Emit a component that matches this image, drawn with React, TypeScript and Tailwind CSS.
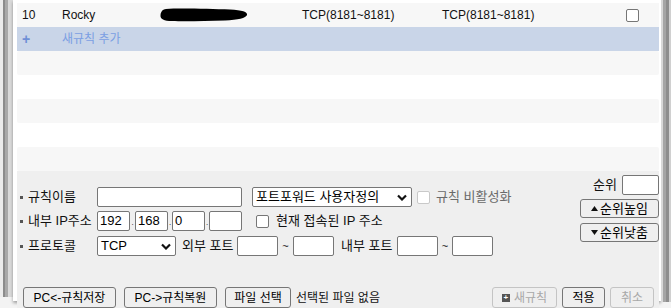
import React from "react";

const Check = ({ disabled = false }: { disabled?: boolean }) => (
  <div
    className={
      "w-[13px] h-[13px] rounded-[2px] border bg-white shrink-0 " +
      (disabled ? "border-[#c9c9c9] bg-[#f4f4f4]" : "border-[#767676]")
    }
  />
);

const Input = ({ w, value = "", h = "h-[20px]" }: { w: string; value?: string; h?: string }) => (
  <div
    className={
      "bg-white border border-[#767676] rounded-[2px] flex items-center pl-[2px] text-[13px] text-black shrink-0 " +
      w +
      " " +
      h
    }
  >
    {value}
  </div>
);

const Chevron = () => (
  <svg width="10" height="7" viewBox="0 0 10 7" className="shrink-0">
    <polyline points="1,1.5 5,5.5 9,1.5" fill="none" stroke="#111" strokeWidth="2.2" />
  </svg>
);

const Select = ({ w, value }: { w: string; value: string }) => (
  <div
    className={
      "bg-white border border-[#767676] rounded-[2px] h-[20px] flex items-center justify-between pl-[3px] pr-[4px] text-[13px] text-black shrink-0 " +
      w
    }
  >
    <span>{value}</span>
    <Chevron />
  </div>
);

const Btn = ({
  children,
  w,
  h = "h-[21px]",
  disabled = false,
  text = "text-[12px]",
}: {
  children: React.ReactNode;
  w: string;
  h?: string;
  disabled?: boolean;
  text?: string;
}) => (
  <div
    className={
      "flex items-center justify-center rounded-[3px] border shrink-0 bg-[#efefef] " +
      (disabled ? "border-[#c4c4c4] text-[#a8a8a8] " : "border-[#767676] text-black ") +
      w +
      " " +
      h +
      " " +
      text
    }
  >
    {children}
  </div>
);

const Bullet = () => <span className="w-[3px] h-[3px] bg-[#555] shrink-0 mr-[5px]" />;

const Tri = ({ down = false }: { down?: boolean }) => (
  <svg width="7" height="5" viewBox="0 0 7 5" className="mr-[2px] shrink-0">
    <polygon points={down ? "0,0 7,0 3.5,5" : "0,5 7,5 3.5,0"} fill="#111" />
  </svg>
);

export default function App() {
  return (
    <div className="w-[671px] h-[308px] bg-[#f3f3f3] flex overflow-hidden font-['Liberation_Sans','Noto_Sans_CJK_KR',sans-serif] text-[#111]">
      {/* left edge */}
      <div className="flex h-[297px] shrink-0">
        <div className="w-[3px] bg-[#ececec]" />
        <div className="w-[2px] bg-[#8c8c8c]" />
        <div className="w-[3px] bg-[#a9a9a9]" />
        <div className="w-[5px] bg-[#dadada]" />
      </div>
      {/* main panel */}
      <div className="w-[648px] h-[301px] bg-white pl-[4px] pr-[2px] pt-[3px] flex flex-col shadow-[0_2px_3px_rgba(0,0,0,0.35)] shrink-0">
        {/* row 10 */}
        <div className="h-[24px] bg-[#f7f7f7] flex items-center text-[12px] text-[#111] shrink-0">
          <div className="w-[45px] pl-[5px]">10</div>
          <div className="w-[98px]">Rocky</div>
          <div className="w-[142px] flex items-center">
            <svg width="88" height="14" viewBox="0 0 88 14">
              <path
                d="M6 1 C20 0 50 1 70 1.5 C82 2 88 4 87 7 C86 10 78 12 65 12.5 C45 13 25 13.5 12 13 C4 13 0 11 0.5 7 C1 3 3 1.2 6 1 Z"
                fill="#000"
              />
            </svg>
          </div>
          <div className="w-[140px]">TCP(8181~8181)</div>
          <div className="w-[184px]">TCP(8181~8181)</div>
          <Check />
        </div>
        {/* new rule row */}
        <div className="h-[24px] bg-[#c9d5e8] flex items-center text-[12px] shrink-0">
          <div className="w-[45px] pl-[5px] text-[#6f8fd6] font-bold text-[14px]">+</div>
          <div className="text-[#7b9fe3]">새규칙 추가</div>
        </div>
        <div className="h-[24px] bg-[#f7f7f7] rounded-[2px] shrink-0" />
        <div className="h-[24px] bg-white shrink-0" />
        <div className="h-[24px] bg-[#f7f7f7] rounded-[2px] shrink-0" />
        <div className="h-[24px] bg-white shrink-0" />
        <div className="h-[24px] bg-[#f7f7f7] rounded-[2px] shrink-0" />
        {/* form area */}
        <div className="flex-1 bg-[#efefef] flex flex-col text-[13px]">
          <div className="flex">
            <div className="flex flex-col pt-[16px] w-[562px]">
              {/* row1 */}
              <div className="flex items-center h-[20px]">
                <div className="w-[80px] pl-[3px] flex items-center">
                  <Bullet />
                  <span>규칙이름</span>
                </div>
                <Input w="w-[145px]" />
                <div className="w-[10px]" />
                <Select w="w-[160px]" value="포트포워드 사용자정의" />
                <div className="w-[5px]" />
                <Check disabled />
                <span className="ml-[6px] text-[#6a6a6a]">규칙 비활성화</span>
              </div>
              {/* row2 */}
              <div className="flex items-center h-[20px] mt-[4px]">
                <div className="w-[80px] pl-[3px] flex items-center">
                  <Bullet />
                  <span>내부 IP주소</span>
                </div>
                <Input w="w-[33px]" value="192" />
                <span className="w-[5px] text-center text-[8px] self-end mb-[2px]">.</span>
                <Input w="w-[33px]" value="168" />
                <span className="w-[4px] text-center text-[8px] self-end mb-[2px]">.</span>
                <Input w="w-[33px]" value="0" />
                <span className="w-[4px] text-center text-[8px] self-end mb-[2px]">.</span>
                <Input w="w-[33px]" />
                <div className="w-[14px]" />
                <Check />
                <span className="ml-[7px]">현재 접속된 IP 주소</span>
              </div>
              {/* row3 */}
              <div className="flex items-center h-[20px] mt-[5px]">
                <div className="w-[80px] pl-[3px] flex items-center">
                  <Bullet />
                  <span>프로토콜</span>
                </div>
                <Select w="w-[79px]" value="TCP" />
                <span className="ml-[6px] w-[55px]">외부 포트</span>
                <Input w="w-[41px]" />
                <span className="w-[15px] text-center text-[11px]">~</span>
                <Input w="w-[41px]" />
                <span className="ml-[7px] w-[56px]">내부 포트</span>
                <Input w="w-[41px]" />
                <span className="w-[14px] text-center text-[11px]">~</span>
                <Input w="w-[41px]" />
              </div>
            </div>
            {/* right column */}
            <div className="flex flex-col items-end pt-[4px] w-[80px]">
              <div className="flex items-center h-[20px]">
                <span className="mr-[5px]">순위</span>
                <Input w="w-[37px]" />
              </div>
              <div className="mt-[4px]">
                <Btn w="w-[79px]" h="h-[19px]" text="text-[13px]">
                  <Tri />
                  순위높임
                </Btn>
              </div>
              <div className="mt-[5px]">
                <Btn w="w-[79px]" h="h-[19px]" text="text-[13px]">
                  <Tri down />
                  순위낮춤
                </Btn>
              </div>
            </div>
          </div>
          {/* bottom buttons */}
          <div className="flex items-center mt-[31px] pl-[6px] pr-[5px]">
            <Btn w="w-[93px]">PC&lt;-규칙저장</Btn>
            <div className="w-[8px]" />
            <Btn w="w-[93px]">PC-&gt;규칙복원</Btn>
            <div className="w-[8px]" />
            <Btn w="w-[66px]">파일 선택</Btn>
            <span className="ml-[5px] text-[12px]">선택된 파일 없음</span>
            <div className="flex-1" />
            <Btn w="w-[65px]" disabled>
              <span className="w-[8px] h-[8px] bg-[#555] text-white text-[8px] leading-[8px] flex items-center justify-center mr-[4px] font-bold">
                +
              </span>
              새규칙
            </Btn>
            <div className="w-[5px]" />
            <Btn w="w-[43px]">적용</Btn>
            <div className="w-[5px]" />
            <Btn w="w-[44px]" disabled>
              취소
            </Btn>
          </div>
        </div>
      </div>
      {/* right edge */}
      <div className="flex h-[302px] shrink-0">
        <div className="w-[2px] bg-[#d8d8d8]" />
        <div className="w-[3px] bg-[#a5a5a5]" />
        <div className="w-[3px] bg-[#8e8e8e]" />
        <div className="w-[2px] bg-[#d0d0d0]" />
      </div>
    </div>
  );
}
